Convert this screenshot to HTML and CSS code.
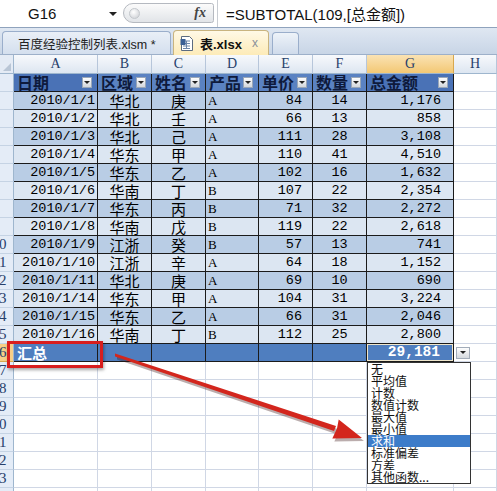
FILE: index.html
```html
<!DOCTYPE html>
<html lang="zh">
<head>
<meta charset="utf-8">
<title>表.xlsx</title>
<link rel="stylesheet" href="styles.css">
</head>
<body>
<div class="app">
  <div class="fbar">
    <div class="namebox"><span>G16</span><span class="nb-arrow"></span></div>
    <div class="pill"><span class="knob"></span><span class="fx">fx</span></div>
    <div class="formula">=SUBTOTAL(109,[总金额])</div>
  </div>
  <div class="tabbar">
    <div class="tab t1">百度经验控制列表.xlsm *</div>
    <div class="tab active">
      <svg class="docicon" width="14" height="15" viewBox="0 0 14 15">
        <path d="M1.5 0.5h8l3 3v11h-11z" fill="#fff" stroke="#5b6b80"/>
        <path d="M3 5h7M3 7.5h7M3 10h7M3 12.5h7M6.5 5v8" stroke="#6d86a8" stroke-width="1"/>
        <rect x="0.5" y="3" width="5" height="6" fill="#3a5f94"/>
      </svg>
      <b class="tabname">表.xlsx</b><span class="close">x</span>
    </div>
    <div class="tab new"></div>
  </div>

  <div class="sheet">
    <div class="row colhdr"><div class="corner"></div><div class="ch">A</div><div class="ch">B</div><div class="ch">C</div><div class="ch">D</div><div class="ch">E</div><div class="ch">F</div><div class="ch sel">G</div><div class="ch">H</div></div>

    <div class="row head"><div class="rh"></div>
      <div class="c t hd dk">日期<span class="fb"></span></div>
      <div class="c t hd">区域<span class="fb"></span></div>
      <div class="c t hd">姓名<span class="fb"></span></div>
      <div class="c t hd">产品<span class="fb"></span></div>
      <div class="c t hd">单价<span class="fb"></span></div>
      <div class="c t hd">数量<span class="fb"></span></div>
      <div class="c t hd dk">总金额<span class="fb"></span></div>
      <div class="c"></div></div>

    <div class="row data r1"><div class="rh"></div><div class="c t m">2010/1/1</div><div class="c t k">华北</div><div class="c t k">庚</div><div class="c t m">A</div><div class="c t m">84</div><div class="c t m">14</div><div class="c t m">1,176</div><div class="c"></div></div>
    <div class="row data r2"><div class="rh"></div><div class="c t m">2010/1/2</div><div class="c t k">华北</div><div class="c t k">壬</div><div class="c t m">A</div><div class="c t m">66</div><div class="c t m">13</div><div class="c t m">858</div><div class="c"></div></div>
    <div class="row data r1"><div class="rh"></div><div class="c t m">2010/1/3</div><div class="c t k">华北</div><div class="c t k">己</div><div class="c t m">A</div><div class="c t m">111</div><div class="c t m">28</div><div class="c t m">3,108</div><div class="c"></div></div>
    <div class="row data r2"><div class="rh"></div><div class="c t m">2010/1/4</div><div class="c t k">华东</div><div class="c t k">甲</div><div class="c t m">A</div><div class="c t m">110</div><div class="c t m">41</div><div class="c t m">4,510</div><div class="c"></div></div>
    <div class="row data r1"><div class="rh"></div><div class="c t m">2010/1/5</div><div class="c t k">华东</div><div class="c t k">乙</div><div class="c t m">A</div><div class="c t m">102</div><div class="c t m">16</div><div class="c t m">1,632</div><div class="c"></div></div>
    <div class="row data r2"><div class="rh"></div><div class="c t m">2010/1/6</div><div class="c t k">华南</div><div class="c t k">丁</div><div class="c t m">B</div><div class="c t m">107</div><div class="c t m">22</div><div class="c t m">2,354</div><div class="c"></div></div>
    <div class="row data r1"><div class="rh"></div><div class="c t m">2010/1/7</div><div class="c t k">华东</div><div class="c t k">丙</div><div class="c t m">B</div><div class="c t m">71</div><div class="c t m">32</div><div class="c t m">2,272</div><div class="c"></div></div>
    <div class="row data r2"><div class="rh"></div><div class="c t m">2010/1/8</div><div class="c t k">华南</div><div class="c t k">戊</div><div class="c t m">B</div><div class="c t m">119</div><div class="c t m">22</div><div class="c t m">2,618</div><div class="c"></div></div>
    <div class="row data r1"><div class="rh">0</div><div class="c t m">2010/1/9</div><div class="c t k">江浙</div><div class="c t k">癸</div><div class="c t m">B</div><div class="c t m">57</div><div class="c t m">13</div><div class="c t m">741</div><div class="c"></div></div>
    <div class="row data r2"><div class="rh">1</div><div class="c t m">2010/1/10</div><div class="c t k">江浙</div><div class="c t k">辛</div><div class="c t m">A</div><div class="c t m">64</div><div class="c t m">18</div><div class="c t m">1,152</div><div class="c"></div></div>
    <div class="row data r1"><div class="rh">2</div><div class="c t m">2010/1/11</div><div class="c t k">华北</div><div class="c t k">庚</div><div class="c t m">A</div><div class="c t m">69</div><div class="c t m">10</div><div class="c t m">690</div><div class="c"></div></div>
    <div class="row data r2"><div class="rh">3</div><div class="c t m">2010/1/14</div><div class="c t k">华东</div><div class="c t k">甲</div><div class="c t m">A</div><div class="c t m">104</div><div class="c t m">31</div><div class="c t m">3,224</div><div class="c"></div></div>
    <div class="row data r1"><div class="rh">4</div><div class="c t m">2010/1/15</div><div class="c t k">华东</div><div class="c t k">乙</div><div class="c t m">A</div><div class="c t m">66</div><div class="c t m">31</div><div class="c t m">2,046</div><div class="c"></div></div>
    <div class="row data r2"><div class="rh">5</div><div class="c t m">2010/1/16</div><div class="c t k">华南</div><div class="c t k">丁</div><div class="c t m">B</div><div class="c t m">112</div><div class="c t m">25</div><div class="c t m">2,800</div><div class="c"></div></div>

    <div class="row tot"><div class="rh cur">6</div><div class="c t k lbl">汇总</div><div class="c t"></div><div class="c t"></div><div class="c t"></div><div class="c t"></div><div class="c t"></div><div class="c t m sum">29,181</div><div class="c hcell"><span class="ddbtn"></span></div></div>

    <div class="row"><div class="rh">7</div><div class="c"></div><div class="c"></div><div class="c"></div><div class="c"></div><div class="c"></div><div class="c"></div><div class="c"></div><div class="c"></div></div>
    <div class="row"><div class="rh">8</div><div class="c"></div><div class="c"></div><div class="c"></div><div class="c"></div><div class="c"></div><div class="c"></div><div class="c"></div><div class="c"></div></div>
    <div class="row"><div class="rh">9</div><div class="c"></div><div class="c"></div><div class="c"></div><div class="c"></div><div class="c"></div><div class="c"></div><div class="c"></div><div class="c"></div></div>
    <div class="row"><div class="rh">0</div><div class="c"></div><div class="c"></div><div class="c"></div><div class="c"></div><div class="c"></div><div class="c"></div><div class="c"></div><div class="c"></div></div>
    <div class="row"><div class="rh">1</div><div class="c"></div><div class="c"></div><div class="c"></div><div class="c"></div><div class="c"></div><div class="c"></div><div class="c"></div><div class="c"></div></div>
    <div class="row"><div class="rh">2</div><div class="c"></div><div class="c"></div><div class="c"></div><div class="c"></div><div class="c"></div><div class="c"></div><div class="c"></div><div class="c"></div></div>
    <div class="row"><div class="rh">3</div><div class="c"></div><div class="c"></div><div class="c"></div><div class="c"></div><div class="c"></div><div class="c"></div><div class="c"></div><div class="c"></div></div>
    <div class="row"><div class="rh"></div><div class="c"></div><div class="c"></div><div class="c"></div><div class="c"></div><div class="c"></div><div class="c"></div><div class="c"></div><div class="c"></div></div>
  </div>

  <div class="redbox"></div>

  <svg class="arrow" width="497" height="491" viewBox="0 0 497 491">
    <g transform="translate(2,3)" fill="rgba(60,20,20,0.35)" stroke="none">
      <polygon points="115,353.5 336,426 334,431 115,356.5"/>
      <polygon points="362,438 332.3,438.6 337,428.5 338.7,419.6"/>
    </g>
    <polygon points="115,353.5 336,426 334,431 115,356.5" fill="#d3261d"/>
    <polygon points="362,438 332.3,438.6 337,428.5 338.7,419.6" fill="#d3261d"/>
  </svg>

  <ul class="ddlist">
    <li>无</li>
    <li>平均值</li>
    <li>计数</li>
    <li>数值计数</li>
    <li>最大值</li>
    <li>最小值</li>
    <li class="hl">求和</li>
    <li>标准偏差</li>
    <li>方差</li>
    <li>其他函数...</li>
  </ul>
</div>
</body>
</html>
```

FILE: styles.css
```css
* { box-sizing: border-box; margin: 0; padding: 0; }
body {
  width: 497px; height: 491px; overflow: hidden; background: #fff;
  font-family: "Liberation Sans", "Noto Sans CJK SC", sans-serif;
}
.app { position: relative; width: 497px; height: 491px; overflow: hidden; }

/* formula bar */
.fbar { display: flex; height: 28px; border-bottom: 1px solid #8fa3bd; background: #fff; }
.namebox {
  width: 123px; display: flex; align-items: center; justify-content: space-between;
  padding: 0 6px 0 28px; font-size: 15px; color: #111;
}
.nb-arrow {
  width: 0; height: 0; border-left: 4px solid transparent; border-right: 4px solid transparent;
  border-top: 4px solid #222;
}
.pill {
  width: 91px; margin: 3px 0 4px; border: 1px solid #b5b9c0; border-radius: 12px 3px 3px 12px;
  background: linear-gradient(#fbfbfb, #e1e4e8); display: flex; align-items: center;
  justify-content: space-between; padding: 0 7px 0 5px;
}
.knob {
  width: 11px; height: 11px; border-radius: 50%;
  background: radial-gradient(circle at 40% 35%, #fff, #c9ccd1); border: 1px solid #c3c7cc;
}
.fx { font-family: "Liberation Serif", serif; font-style: italic; font-weight: bold; font-size: 14px; color: #444; }
.formula {
  flex: 1; border-left: 1px solid #c8ccd2; margin-left: 3px; padding-left: 8px;
  display: flex; align-items: center; font-size: 15px; color: #111;
  font-family: "Liberation Sans", "Noto Sans CJK SC", sans-serif;
}

/* tabs */
.tabbar {
  height: 27px; display: flex; align-items: flex-end; gap: 2px; padding-left: 2px;
  background: linear-gradient(#dfe7f2, #c8d5e6); border-bottom: 1px solid #9db0c9;
}
.tab {
  height: 23px; border: 1px solid #9aaecb; border-bottom: none; border-radius: 4px 4px 0 0;
  display: flex; align-items: center; font-size: 12.5px; color: #222;
  font-family: "Liberation Sans", "Noto Sans CJK SC", sans-serif;
}
.t1 { width: 169px; padding-left: 15px; background: linear-gradient(#e9eff7, #d4dfee); }
.tab.active {
  width: 96px; height: 25px; margin-bottom: -1px; padding-left: 6px;
  background: linear-gradient(#fff9e6, #fdebb8); border-color: #c9b47f;
}
.docicon { margin-right: 6px; }
.tabname { font-size: 13px; color: #111; }
.close { margin-left: 10px; font-size: 12px; color: #8a8f98; }
.tab.new { width: 27px; height: 22px; margin-left: 1px; background: linear-gradient(#eef3f9, #cfdbeb); }

/* sheet */
.row {
  display: grid; grid-template-columns: 14px 84px 54px 54px 53px 54px 54px 87px 43px;
  height: 18px;
}
.colhdr { height: 19px; }
.corner {
  background: #e4ebf5; border-right: 1px solid #9eb6ce; border-bottom: 1px solid #9eb6ce;
  position: relative;
}
.corner::after {
  content: ""; position: absolute; right: 2px; bottom: 2px; width: 0; height: 0;
  border-left: 8px solid transparent; border-bottom: 8px solid #b9c6d6;
}
.ch {
  background: linear-gradient(#f7f9fc, #dde6f1); border-right: 1px solid #b7c6da;
  border-bottom: 1px solid #9eb6ce; text-align: center; line-height: 18px;
  font-family: "Liberation Serif", serif; font-size: 14px; color: #27406b;
}
.ch.sel { background: linear-gradient(#fae3b4, #f3c874); border-right-color: #d8a84e; }
.rh {
  background: #e4ecf7; border-right: 1px solid #9eb6ce; border-bottom: 1px solid #c5d3e4;
  font-family: "Liberation Serif", serif; font-size: 15px; color: #27406b;
  line-height: 17px; overflow: hidden; text-indent: -1px;
}
.rh.cur { background: #f6cf88; border-bottom-color: #d8a84e; }

.c {
  border-right: 1px solid #d0d7e5; border-bottom: 1px solid #d0d7e5;
  line-height: 17px; white-space: nowrap; color: #000;
}
.c.t { border-color: #1b1b1b; }
.m { font-family: "Liberation Mono", monospace; font-size: 13.5px; }
.k { font-family: "Noto Sans CJK SC", sans-serif; font-size: 15px; }

.r1 .t { background: #b9cde5; }
.r2 .t { background: #dce6f2; }

.data > :nth-child(2) { text-align: right; padding-right: 2px; }
.data > :nth-child(3), .data > :nth-child(4), .data > :nth-child(7) { text-align: center; }
.data > :nth-child(5) { text-align: left; padding-left: 2px; font-family: "Liberation Serif", serif; font-size: 13px; }
.data > :nth-child(6) { text-align: right; padding-right: 10px; }
.data > :nth-child(8) { text-align: right; padding-right: 12px; }

/* table header */
.hd {
  background: #5a82c2; display: flex; align-items: center; justify-content: space-between;
  padding: 0 5px 0 3px; font-family: "Noto Sans CJK SC", sans-serif; font-weight: bold;
  font-size: 16px; color: #0e1a3c;
}
.hd.dk { background: #4a72b6; }
.fb {
  flex: none; width: 10px; height: 11px; background: linear-gradient(#fdfdfd, #d3d7dc);
  border: 1px solid #9aa7b8; display: flex; align-items: center; justify-content: center;
}
.fb::after {
  content: ""; width: 0; height: 0; border-left: 3px solid transparent;
  border-right: 3px solid transparent; border-top: 3px solid #222;
}

/* total row */
.tot .t { background: #4f7ebf; }
.lbl { color: #fff; font-weight: bold; padding-left: 3px; font-size: 15px; }
.sum {
  color: #fff; font-weight: bold; font-size: 14.5px; text-align: right; padding-right: 13px;
  box-shadow: inset 0 0 0 1px #efe6cc;
}
.hcell { display: flex; align-items: center; padding-left: 2px; }
.ddbtn {
  width: 14px; height: 12px; background: linear-gradient(#fdfdfd, #d5d9de);
  border: 1px solid #a2acb9; display: flex; align-items: center; justify-content: center;
}
.ddbtn::after {
  content: ""; width: 0; height: 0; border-left: 3px solid transparent;
  border-right: 3px solid transparent; border-top: 3px solid #222;
}

/* overlays */
.redbox {
  position: absolute; left: 7px; top: 341px; width: 96px; height: 27px;
  border: 3px solid #d81e1e; box-shadow: 1px 2px 3px rgba(0, 0, 0, 0.35);
}
.arrow { position: absolute; left: 0; top: 0; pointer-events: none; }
.ddlist {
  position: absolute; left: 367px; top: 362px; width: 104px; height: 122px;
  background: #fff; border: 1px solid #333; list-style: none;
  font-family: "Noto Sans CJK SC", sans-serif; font-size: 12px; color: #111;
}
.ddlist li { height: 12px; line-height: 12px; padding-left: 3px; white-space: nowrap; }
.ddlist li.hl { background: #3d7cc9; color: #fff; }
```
